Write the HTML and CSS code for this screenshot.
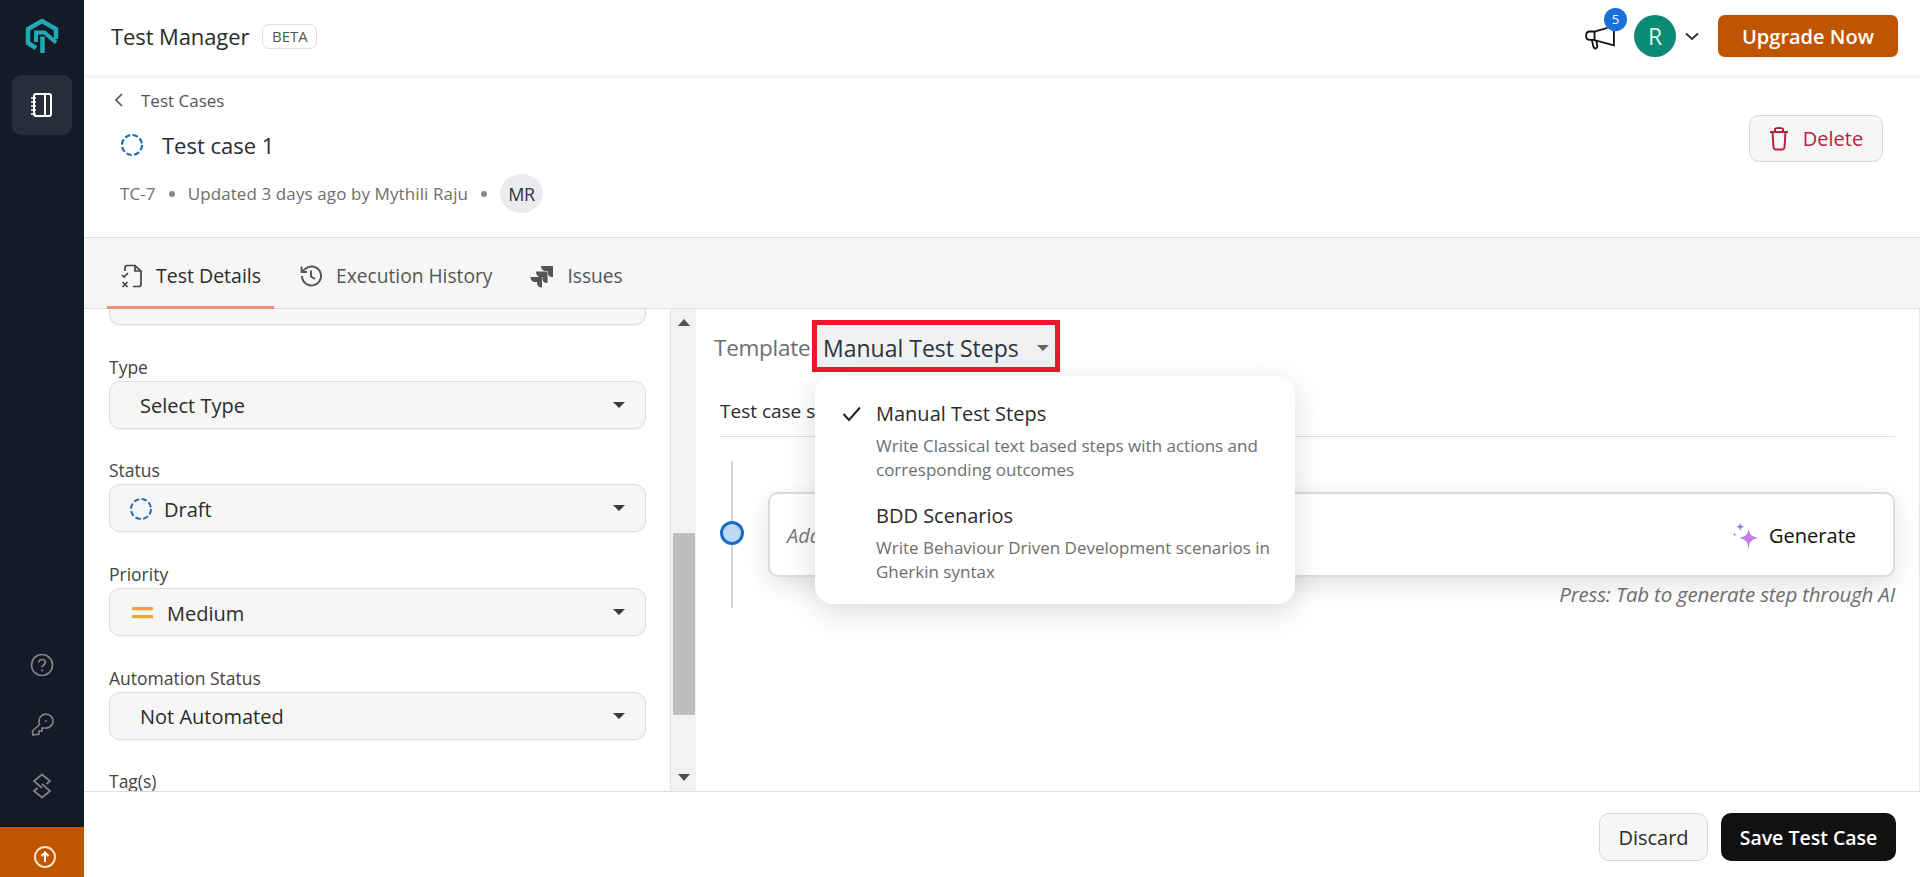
FILE: index.html
```html
<!DOCTYPE html>
<html lang="en">
<head>
  <meta charset="UTF-8" />
  <title>Test Manager</title>
  <link rel="stylesheet" href="styles.css">
</head>
<body>
  <div class="app">
    <aside class="sidebar">
      <div class="logo">
        <svg width="34" height="36" viewBox="0 0 34 36" fill="none" stroke="#1fa9b5" stroke-width="4.500">
          <path d="M11 30 L3 25 V11 L17 3 L31 11 V21"/>
          <path d="M11 24 V14.500 H19.500 L31 24.500" stroke-width="4"/>
          <path d="M17.500 35 V18.500" stroke-width="4.500"/>
        </svg>
      </div>
      <a class="side-active">
        <svg width="24" height="26" viewBox="0 0 24 26" fill="none" stroke="#fff" stroke-width="2">
          <rect x="4" y="2" width="17" height="22" rx="2"/>
          <path d="M15 2 V24" />
          <path d="M1 6 H6 M1 10 H6 M1 14 H6 M1 18 H6 M1 22 H6" stroke-width="1.6"/>
        </svg>
      </a>
      <div class="side-tools">
        <svg width="24" height="24" viewBox="0 0 24 24" fill="none" stroke="#7d828a" stroke-width="1.7">
          <circle cx="12" cy="12" r="10.5"/>
          <path d="M8.8 9.5 C8.8 5.5 15.4 5.5 15.4 9.5 C15.4 12 12 12 12 14.5"/>
          <circle cx="12" cy="17.5" r="1" fill="#7d828a" stroke="none"/>
        </svg>
        <svg width="24" height="24" viewBox="0 0 24 24" fill="none" stroke="#7d828a" stroke-width="1.7">
          <path d="M9 8.5 A7 7 0 1 1 15 15 L12 15 L12 18 L9 18 L9 21 L3 22 L2.5 18 L9.5 11.5 A7 7 0 0 1 9 8.5 Z"/>
          <circle cx="16" cy="8" r="1" fill="#7d828a" stroke="none"/>
        </svg>
        <svg width="24" height="26" viewBox="0 0 24 26" fill="none" stroke="#7d828a" stroke-width="1.8">
          <path d="M16.500 11 L20 8 L12 1.500 L4 8 L12 15"/>
          <path d="M7.500 15 L4 18 L12 24.500 L20 18 L12 11"/>
        </svg>
      </div>
      <div class="side-upgrade">
        <svg width="24" height="24" viewBox="0 0 24 24" fill="none" stroke="#fde3c4" stroke-width="2">
          <circle cx="12" cy="12" r="10"/>
          <path d="M12 17 V8 M8.5 11 L12 7.5 L15.5 11" stroke="#fff"/>
        </svg>
      </div>
    </aside>

    <div class="main">
      <header class="topbar">
        <div class="brand">
          <span class="brand-name">Test Manager</span>
          <span class="beta">BETA</span>
        </div>
        <div class="top-actions">
          <div class="announce">
            <svg width="32" height="24" viewBox="0 0 34 26" fill="none" stroke="#111" stroke-width="2">
              <path d="M24 2 L10 6 H5 C-0.5 6 -0.5 15 5 15 H9 L31 21 V3"/>
              <path d="M10 6 V15 M7 15 L9 23 C10 25 13 25 13 22 L12 16"/>
            </svg>
            <span class="announce-count">5</span>
          </div>
          <span class="avatar">R</span>
          <svg class="avatar-caret" width="14" height="9" viewBox="0 0 14 9" fill="none" stroke="#333" stroke-width="2">
            <path d="M1 1.5 L7 7 L13 1.5"/>
          </svg>
          <button class="upgrade-btn">Upgrade Now</button>
        </div>
      </header>

      <section class="case-head">
        <div class="case-info">
          <div class="crumb">
            <svg width="10" height="16" viewBox="0 0 10 16" fill="none" stroke="#555" stroke-width="1.7">
              <path d="M8 2 L2 8 L8 14"/>
            </svg>
            <span>Test Cases</span>
          </div>
          <div class="case-title">
            <svg width="24" height="24" viewBox="0 0 24 24" fill="none" stroke="#1a6fb8" stroke-width="2.2">
              <circle cx="12" cy="12" r="10" stroke-dasharray="5.5 2.4"/>
            </svg>
            <span>Test case 1</span>
          </div>
          <div class="case-meta">
            <span>TC-7</span>
            <i class="dot"></i>
            <span>Updated 3 days ago by Mythili Raju</span>
            <i class="dot"></i>
            <span class="initials">MR</span>
          </div>
        </div>
        <button class="delete-btn">
          <svg width="20" height="25" viewBox="0 0 20 25" fill="none" stroke="#b8233b" stroke-width="2">
            <path d="M1 6 H19 M6 6 V3 C6 1.5 14 1.5 14 3 V6 M3.5 6 L4.5 21 C4.6 23 5.5 23.5 7 23.5 H13 C14.5 23.5 15.4 23 15.5 21 L16.5 6"/>
          </svg>
          Delete
        </button>
      </section>

      <nav class="tabs">
        <a class="tab tab-active">
          <svg width="22" height="24" viewBox="0 0 22 24" fill="none" stroke="#444" stroke-width="1.7">
            <path d="M4 7 V4 C4 2 5 1.5 6 1.5 H14 L20 7 V20 C20 22 19 22.5 18 22.5 H12"/>
            <path d="M14 1.5 V7 H20"/>
            <path d="M1 11 L3 13 L7 9 M1.5 18 L6.5 23 M6.5 18 L1.5 23"/>
          </svg>
          Test Details
        </a>
        <a class="tab">
          <svg width="24" height="24" viewBox="0 0 24 24" fill="none" stroke="#555" stroke-width="2">
            <path d="M3 12 A9.5 9.5 0 1 0 6 5 L3 7.5"/>
            <path d="M2.5 2.5 V8 H8" stroke-width="1.8"/>
            <path d="M12 6.5 V12.5 L16 15"/>
          </svg>
          Execution History
        </a>
        <a class="tab">
          <svg width="24" height="24" viewBox="0 0 24 24" fill="#555">
            <path d="M11 2 H23 V13 C19 13 18 11 18 9 V7 H16 C13 7 11 5 11 2 Z"/>
            <path d="M6 7.5 H17.5 V19 C14 19 12.5 17 12.5 15 V13 H11 C8 13 6 11 6 7.5 Z"/>
            <path d="M0.5 13 H12 V23.5 C9 23.5 7 22 7 19 V18 H5 C2.500 18 0.5 16 0.5 13 Z"/>
          </svg>
          Issues
        </a>
      </nav>

      <div class="content">
        <div class="fields">
          <div class="select select-cut"></div>

          <div class="field">
            <label>Type</label>
            <div class="select"><span class="select-value select-plain">Select Type</span><i class="caret"></i></div>
          </div>
          <div class="field">
            <label>Status</label>
            <div class="select">
              <span class="select-value">
                <svg width="24" height="24" viewBox="0 0 24 24" fill="none" stroke="#1a6fb8" stroke-width="2">
                  <circle cx="12" cy="12" r="10" stroke-dasharray="5.5 2.4"/>
                </svg>
                Draft
              </span>
              <i class="caret"></i>
            </div>
          </div>
          <div class="field">
            <label>Priority</label>
            <div class="select">
              <span class="select-value">
                <svg class="medium-icon" width="21" height="14" viewBox="0 0 21 14" fill="#eda62c">
                  <rect x="0" y="1" width="21" height="3.200" rx="1"/>
                  <rect x="0" y="9" width="21" height="3.200" rx="1"/>
                </svg>
                Medium
              </span>
              <i class="caret"></i>
            </div>
          </div>
          <div class="field">
            <label>Automation Status</label>
            <div class="select"><span class="select-value select-plain">Not Automated</span><i class="caret"></i></div>
          </div>
          <div class="field field-last">
            <label>Tag(s)</label>
          </div>
        </div>

        <div class="scrollbar">
          <i class="arrow-up"></i>
          <div class="track"><div class="thumb"></div></div>
          <i class="arrow-down"></i>
        </div>

        <div class="editor">
          <div class="template-row">
            <span class="template-label">Template</span>
            <div class="template-pick">
              <span>Manual Test Steps</span>
              <i class="caret caret-gray"></i>
            </div>
          </div>

          <div class="steps-head">Test case steps</div>

          <div class="step-row">
            <div class="timeline"><span class="step-node"></span></div>
            <div class="step-body">
              <div class="step-card">
                <span class="step-placeholder">Add step</span>
                <span class="generate">
                  <svg width="27" height="27" viewBox="0 0 26 26">
                    <path d="M16 6 C16.800 12 18 13.500 25 15.500 C18 17.500 16.800 19 16 26 C15.200 19 14 17.500 7 15.500 C14 13.500 15.200 12 16 6 Z" fill="#c77be6"/>
                    <path d="M8 0 C8.400 3 9 3.800 12 4.500 C9 5.200 8.400 6 8 9 C7.600 6 7 5.200 4 4.500 C7 3.800 7.600 3 8 0 Z" fill="#9a78e0"/>
                    <path d="M2.500 10 C2.700 11.400 3 11.800 4.500 12 C3 12.200 2.700 12.600 2.500 14 C2.300 12.600 2 12.200 0.500 12 C2 11.800 2.300 11.400 2.500 10 Z" fill="#9a78e0"/>
                  </svg>
                  Generate
                </span>
              </div>
              <p class="step-hint">Press: Tab to generate step through AI</p>
            </div>
          </div>

          <div class="template-menu">
            <div class="menu-item">
              <svg class="menu-check" width="20" height="16" viewBox="0 0 20 16" fill="none" stroke="#222" stroke-width="2">
                <path d="M1.500 8 L7 14 L18 1.500"/>
              </svg>
              <div class="menu-title">Manual Test Steps</div>
              <div class="menu-desc">Write Classical text based steps with actions and corresponding outcomes</div>
            </div>
            <div class="menu-item">
              <div class="menu-title">BDD Scenarios</div>
              <div class="menu-desc">Write Behaviour Driven Development scenarios in Gherkin syntax</div>
            </div>
          </div>
        </div>
      </div>

      <footer class="footer">
        <button class="discard-btn">Discard</button>
        <button class="save-btn">Save Test Case</button>
      </footer>
    </div>
  </div>
</body>
</html>
```

FILE: styles.css
```css
:root {
  --navy: #141a26;
  --orange: #c05500;
  --line: #dedede;
  --panel: #f6f6f6;
  --text: #2b2b2b;
  --muted: #6e6e6e;
}

* {
  box-sizing: border-box;
}

html,
body {
  height: 100%;
}

body {
  margin: 0;
  font-family: "Open Sans", "Noto Sans", sans-serif;
  color: var(--text);
  background: #fff;
  overflow: hidden;
}

button {
  font-family: inherit;
  cursor: pointer;
}

.app {
  display: flex;
  height: 877px;
}

/* left rail */
.sidebar {
  width: 84px;
  flex: none;
  display: flex;
  flex-direction: column;
  background: var(--navy);
}

.logo {
  height: 75px;
  display: flex;
  justify-content: center;
  align-items: flex-start;
  padding-top: 18px;
}

.side-active {
  width: 60px;
  height: 60px;
  margin-left: 12px;
  display: flex;
  justify-content: center;
  align-items: center;
  background: #282e39;
  border-radius: 9px;
}

.side-tools {
  margin-top: auto;
  margin-bottom: 28px;
  display: flex;
  flex-direction: column;
  align-items: center;
  gap: 36px;
}

.side-upgrade {
  height: 50px;
  display: flex;
  justify-content: center;
  align-items: center;
  padding-top: 9px;
  padding-left: 5px;
  background: var(--orange);
}

.main {
  flex: 1;
  min-width: 0;
  display: flex;
  flex-direction: column;
}

/* top bar */
.topbar {
  height: 78px;
  flex: none;
  display: flex;
  justify-content: space-between;
  align-items: center;
  padding: 0 22px 3px 27px;
  border-bottom: 3px solid #f5f5f5;
}

.brand {
  display: flex;
  align-items: center;
  gap: 13px;
}

.brand-name {
  font-size: 22px;
  letter-spacing: -0.1px;
}

.beta {
  width: 55px;
  height: 25px;
  display: flex;
  justify-content: center;
  align-items: center;
  font-size: 15px;
  color: #555;
  border: 1px solid #ddd;
  border-radius: 7px;
}

.top-actions {
  display: flex;
  align-items: center;
}

.announce {
  position: relative;
  width: 32px;
  height: 24px;
  margin-right: 17px;
  margin-top: 3px;
}

.announce-count {
  position: absolute;
  top: -18px;
  left: 19px;
  width: 23px;
  height: 23px;
  display: flex;
  justify-content: center;
  align-items: center;
  font-size: 13px;
  color: #fff;
  background: #1a6fd8;
  border-radius: 50%;
}

.avatar {
  width: 42px;
  height: 42px;
  display: flex;
  justify-content: center;
  align-items: center;
  font-size: 23px;
  color: #d9f5ee;
  background: #0b8a74;
  border-radius: 50%;
}

.avatar-caret {
  margin: 0 19px 0 9px;
}

.upgrade-btn {
  width: 180px;
  height: 42px;
  font-size: 20px;
  font-weight: 600;
  color: #fff;
  background: var(--orange);
  border: 0;
  border-radius: 7px;
}

/* case header */
.case-head {
  height: 160px;
  flex: none;
  display: flex;
  justify-content: space-between;
  padding: 0 37px 0 34px;
  border-bottom: 1px solid var(--line);
}

.case-info {
  display: flex;
  flex-direction: column;
}

.crumb {
  height: 22px;
  margin-top: 11px;
  margin-left: -4px;
  display: flex;
  align-items: center;
  gap: 17px;
  font-size: 17px;
  color: #555;
}

.case-title {
  margin-top: 19px;
  margin-left: 2px;
  height: 30px;
  display: flex;
  align-items: center;
  gap: 18px;
  font-size: 22px;
  font-weight: 500;
}

.case-meta {
  margin-top: 14px;
  margin-left: 2px;
  display: flex;
  align-items: center;
  gap: 13px;
  font-size: 17px;
  letter-spacing: 0.1px;
  color: var(--muted);
}

.dot {
  width: 6px;
  height: 6px;
  background: #888;
  border-radius: 50%;
}

.initials {
  width: 43px;
  height: 39px;
  display: flex;
  justify-content: center;
  align-items: center;
  font-size: 18px;
  letter-spacing: -0.3px;
  color: #2b3644;
  background: #e9ebef;
  border-radius: 50%;
}

.delete-btn {
  width: 134px;
  height: 47px;
  margin-top: 37px;
  display: flex;
  justify-content: center;
  align-items: center;
  gap: 14px;
  font-size: 20px;
  color: #b8233b;
  background: var(--panel);
  border: 1px solid #d8d8d8;
  border-radius: 10px;
}

/* tabs */
.tabs {
  height: 71px;
  flex: none;
  display: flex;
  padding-left: 23px;
  background: var(--panel);
  border-bottom: 1px solid var(--line);
}

.tab {
  display: flex;
  align-items: center;
  gap: 13px;
  padding: 7px 13px 0 14px;
  margin: 0 11px -1px 0;
  font-size: 19.200px;
  color: #555;
  border-bottom: 3px solid transparent;
}

.tab-active {
  font-size: 19.500px;
  font-weight: 500;
  color: var(--text);
  border-bottom-color: #f08f80;
}

/* panels */
.content {
  flex: 1;
  min-height: 0;
  display: flex;
}

.fields {
  width: 586px;
  flex: none;
  padding: 0 24px 0 25px;
}

.field {
  margin-top: 30.700px;
}

.field label {
  display: block;
  margin-bottom: 3px;
  font-size: 17.500px;
  line-height: 22px;
  color: #444;
}

.field-last {
  margin-top: 32.700px;
}

.field-last label {
  line-height: 18px;
  margin-bottom: 0;
}

.select {
  position: relative;
  height: 48px;
  display: flex;
  justify-content: space-between;
  align-items: center;
  padding-right: 20px;
  background: var(--panel);
  border: 1px solid var(--line);
  border-radius: 11px;
  box-shadow: 0 1px 2px rgba(0, 0, 0, 0.05);
}

.select-cut {
  height: 16px;
  margin-top: 0;
  border-top: 0;
  border-radius: 0 0 11px 11px;
}

.select-value {
  display: flex;
  align-items: center;
  gap: 11px;
  padding: 2px 0 0 19px;
  font-size: 20px;
}

.select-plain {
  padding-left: 30px;
}

.medium-icon {
  margin-left: 3px;
  margin-right: 3px;
}

.caret {
  width: 0;
  height: 0;
  border-left: 6px solid transparent;
  border-right: 6px solid transparent;
  border-top: 6px solid #3a3a3a;
}

.caret-gray {
  border-top-color: #666;
}

.scrollbar {
  width: 26px;
  flex: none;
  display: flex;
  flex-direction: column;
  align-items: center;
  padding: 10px 1px 10px 2px;
  background: #f2f2f2;
  border-left: 1px solid #e3e3e3;
}

.arrow-up,
.arrow-down {
  flex: none;
  width: 0;
  height: 0;
  border-left: 6px solid transparent;
  border-right: 6px solid transparent;
}

.arrow-up {
  border-bottom: 7px solid #505050;
}

.arrow-down {
  border-top: 7px solid #505050;
}

.track {
  flex: 1;
  width: 100%;
  padding-top: 207px;
}

.thumb {
  height: 182px;
  background: #bdbdbd;
}

/* right side */
.editor {
  position: relative;
  flex: 1;
  min-width: 0;
  padding: 11px 24px 0 24px;
  border-right: 1px solid #e6e6e6;
}

.template-row {
  height: 52px;
  display: flex;
  align-items: center;
  margin-left: -6px;
}

.template-label {
  width: 98px;
  padding-top: 2px;
  font-size: 22.500px;
  letter-spacing: -0.25px;
  color: var(--muted);
}

.template-pick {
  width: 248px;
  height: 52px;
  display: flex;
  align-items: center;
  gap: 18px;
  padding: 3px 0 0 6px;
  font-size: 23px;
  font-weight: 500;
  color: #2d333a;
  background: #eff1f3;
  border: 5px solid #e8192c;
}

.steps-head {
  height: 53px;
  margin-top: 12px;
  padding-top: 14px;
  font-size: 19px;
  font-weight: 500;
  border-bottom: 1px solid var(--line);
}

.step-row {
  display: flex;
  gap: 24px;
  margin-top: 24px;
}

.timeline {
  width: 24px;
  height: 147px;
  flex: none;
  display: flex;
  justify-content: center;
  align-items: center;
  background: linear-gradient(#d4d4d4, #d4d4d4) center / 2px 100% no-repeat;
}

.step-node {
  width: 24px;
  height: 24px;
  margin-top: -3px;
  background: #bdd7f5;
  border: 3px solid #1a6fc4;
  border-radius: 50%;
}

.step-body {
  flex: 1;
  margin-top: 31px;
}

.step-card {
  height: 85px;
  display: flex;
  justify-content: space-between;
  align-items: center;
  padding: 2px 37px 0 17px;
  background: #fff;
  border: 2px solid #dcdcdc;
  border-radius: 10px;
  box-shadow: 0 8px 24px rgba(0, 0, 0, 0.12);
}

.step-placeholder {
  font-size: 20px;
  font-style: italic;
  color: #777;
}

.generate {
  display: flex;
  align-items: center;
  gap: 10px;
  font-size: 20px;
  font-weight: 500;
  color: #111;
}

.step-hint {
  margin: 3px 0 0;
  text-align: right;
  font-size: 20.500px;
  font-style: italic;
  letter-spacing: -0.2px;
  color: var(--muted);
}

.template-menu {
  position: absolute;
  top: 67px;
  left: 119px;
  width: 480px;
  height: 228px;
  padding: 23px 18px 0 61px;
  background: #fff;
  border-radius: 18px;
  box-shadow: 0 8px 32px rgba(0, 0, 0, 0.14);
}

.menu-item {
  position: relative;
  margin-bottom: 19px;
}

.menu-check {
  position: absolute;
  left: -34px;
  top: 7px;
}

.menu-title {
  font-size: 20px;
  line-height: 30px;
  font-weight: 500;
  color: #2b2b2b;
}

.menu-desc {
  margin-top: 5px;
  font-size: 17px;
  line-height: 24px;
  color: var(--muted);
}

/* bottom */
.footer {
  height: 86px;
  flex: none;
  display: flex;
  justify-content: flex-end;
  align-items: center;
  gap: 13px;
  padding: 5px 24px 0 0;
  border-top: 1px solid var(--line);
}

.discard-btn,
.save-btn {
  height: 48px;
  font-size: 20px;
  border-radius: 10px;
}

.discard-btn {
  width: 109px;
  color: var(--text);
  background: var(--panel);
  border: 1px solid #d8d8d8;
}

.save-btn {
  width: 175px;
  font-size: 19.500px;
  font-weight: 600;
  color: #fff;
  background: #111;
  border: 0;
}
```
